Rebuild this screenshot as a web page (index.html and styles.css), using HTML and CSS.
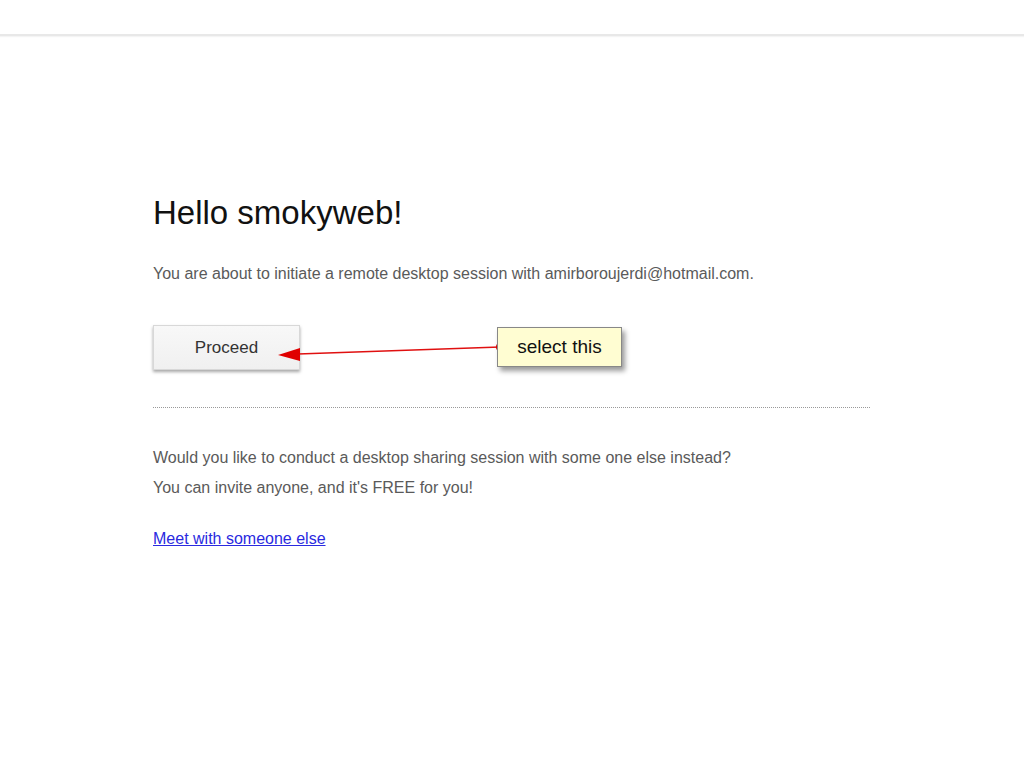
FILE: index.html
```html
<html>
<head>
<meta charset="UTF-8">
<title>Remote Desktop Session</title>
<link rel="stylesheet" href="styles.css">
</head>
<body>
<div class="topbar"></div>
<div class="main">
	<h1>Hello smokyweb!</h1>
	<p class="intro">You are about to initiate a remote desktop session with amirboroujerdi@hotmail.com.</p>
	<div class="actions">
		<button class="proceed">Proceed</button>
		<svg class="arrow" width="230" height="20" viewBox="0 0 230 20">
			<line x1="20" y1="13" x2="222" y2="6" stroke="#e01010" stroke-width="1.5"/>
			<polygon points="0,14 22,7 22,20" fill="#e00000"/>
			<circle cx="222" cy="6" r="4" fill="#e00000"/>
		</svg>
		<div class="note">select this</div>
	</div>
	<hr class="sep">
	<p class="other">Would you like to conduct a desktop sharing session with some one else instead?<br>
	You can invite anyone, and it's FREE for you!</p>
	<a class="meet" href="#">Meet with someone else</a>
</div>
</body>
</html>
```

FILE: styles.css
```css
body {
	margin: 0;
	background-color: #ffffff;
	font-family: 'Liberation Sans', Arial, sans-serif;
	color: #5a5a5a;
}
.topbar {
	height: 34px;
	border-bottom: 2px solid #e8e8e8;
	box-shadow: 0 1px 1px #f4f4f4;
}
.main {
	width: 717px;
	padding-left: 153px;
	padding-top: 157px;
}
h1 {
	margin: 0;
	font-size: 33px;
	font-weight: normal;
	color: #111111;
	line-height: 40px;
}
.intro {
	margin: 31px 0 0 0;
	font-size: 16px;
	line-height: 20px;
}
.actions {
	position: relative;
	margin-top: 41px;
	height: 46px;
}
.proceed {
	width: 147px;
	height: 45px;
	background: linear-gradient(#f8f8f8, #f0f0f0);
	border: 1px solid #d8d8d8;
	box-shadow: 0 2px 3px rgba(0, 0, 0, 0.35);
	font-family: 'Liberation Sans', Arial, sans-serif;
	font-size: 17px;
	color: #333333;
	padding: 0;
}
.arrow {
	position: absolute;
	left: 125px;
	top: 16px;
}
.note {
	position: absolute;
	left: 344px;
	top: 2px;
	width: 123px;
	height: 38px;
	line-height: 38px;
	text-align: center;
	background-color: #fffdd2;
	border: 1px solid #888888;
	box-shadow: 3px 4px 5px rgba(0, 0, 0, 0.4);
	font-size: 19px;
	color: #111111;
}
.sep {
	margin: 36px 0 0 0;
	border: none;
	border-top: 1px dotted #999999;
}
.other {
	margin: 35px 0 0 0;
	font-size: 16px;
	line-height: 30px;
}
.meet {
	display: inline-block;
	margin-top: 27px;
	font-size: 16px;
	color: #2a2ae0;
}
```
